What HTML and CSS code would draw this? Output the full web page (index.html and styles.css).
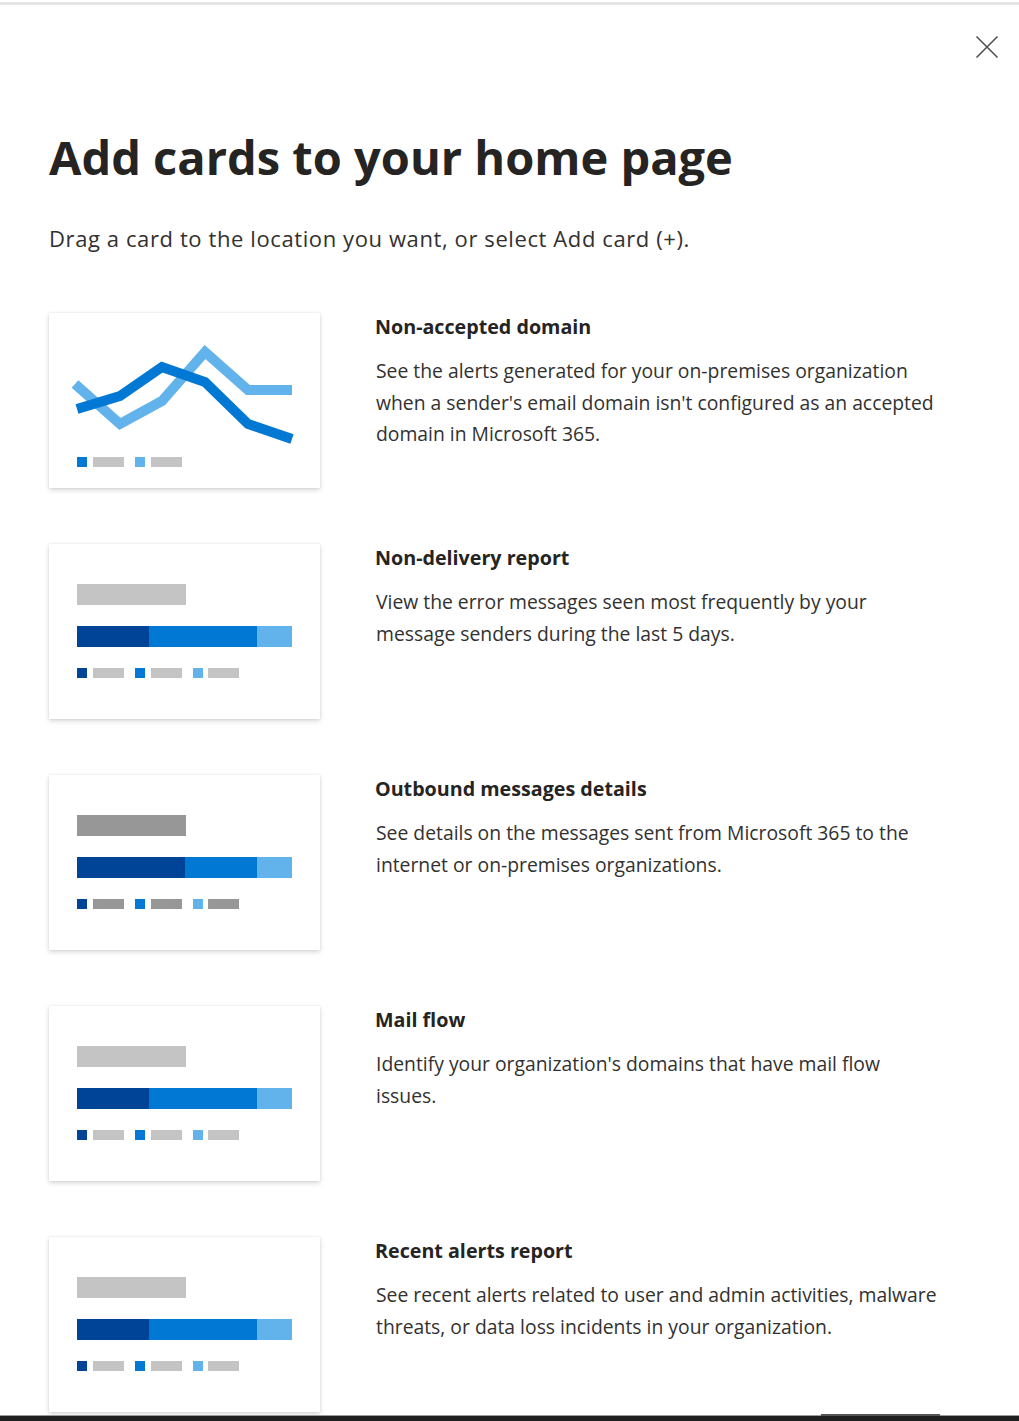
FILE: index.html
```html
<!DOCTYPE html>
<html lang="en">
<head>
<meta charset="utf-8">
<title>Add cards to your home page</title>
<link rel="stylesheet" href="styles.css">
</head>
<body>
<div class="page">
  <div class="panel">
    <div class="panel-header">
      <button class="close" aria-label="Close">
        <svg width="24" height="24" viewBox="0 0 24 24"><path d="M1.5 1.5 L22.5 22.5 M22.5 1.5 L1.5 22.5" stroke="#4a4a4a" stroke-width="1.5" fill="none"/></svg>
      </button>
    </div>
    <h1 class="title">Add cards to your home page</h1>
    <p class="subtitle">Drag a card to the location you want, or select Add card (+).</p>

    <div class="cards">
      <div class="card-row">
        <div class="thumb">
          <svg width="271" height="175" viewBox="0 0 271 175">
            <polyline points="26,71 71,111 113,88 156,39 199,77 243,77" fill="none" stroke="#62b2ec" stroke-width="10" stroke-linejoin="miter"/>
            <polyline points="28,96 71,83 113,54 156,69 199,111 243,126" fill="none" stroke="#0078d4" stroke-width="10" stroke-linejoin="miter"/>
            <rect x="28" y="144" width="10" height="10" fill="#0078d4"/>
            <rect x="44" y="144" width="31" height="10" fill="#c4c4c4"/>
            <rect x="86" y="144" width="10" height="10" fill="#62b2ec"/>
            <rect x="102" y="144" width="31" height="10" fill="#c4c4c4"/>
          </svg>
        </div>
        <div class="info">
          <h2 class="card-title">Non-accepted domain</h2>
          <p class="card-desc">See the alerts generated for your on-premises organization when a sender's email domain isn't configured as an accepted domain in Microsoft 365.</p>
        </div>
      </div>

      <div class="card-row">
        <div class="thumb">
          <svg width="271" height="175" viewBox="0 0 271 175">
            <rect x="28" y="40" width="109" height="21" fill="#c4c4c4"/>
            <rect x="28" y="82" width="72" height="21" fill="#004497"/>
            <rect x="100" y="82" width="108" height="21" fill="#0078d4"/>
            <rect x="208" y="82" width="35" height="21" fill="#62b2ec"/>
            <rect x="28" y="124" width="10" height="10" fill="#004497"/>
            <rect x="44" y="124" width="31" height="10" fill="#c4c4c4"/>
            <rect x="86" y="124" width="10" height="10" fill="#0078d4"/>
            <rect x="102" y="124" width="31" height="10" fill="#c4c4c4"/>
            <rect x="144" y="124" width="10" height="10" fill="#62b2ec"/>
            <rect x="159" y="124" width="31" height="10" fill="#c4c4c4"/>
          </svg>
        </div>
        <div class="info">
          <h2 class="card-title">Non-delivery report</h2>
          <p class="card-desc">View the error messages seen most frequently by your message senders during the last 5 days.</p>
        </div>
      </div>

      <div class="card-row">
        <div class="thumb">
          <svg width="271" height="175" viewBox="0 0 271 175">
            <rect x="28" y="40" width="109" height="21" fill="#979797"/>
            <rect x="28" y="82" width="108" height="21" fill="#004497"/>
            <rect x="136" y="82" width="72" height="21" fill="#0078d4"/>
            <rect x="208" y="82" width="35" height="21" fill="#62b2ec"/>
            <rect x="28" y="124" width="10" height="10" fill="#004497"/>
            <rect x="44" y="124" width="31" height="10" fill="#979797"/>
            <rect x="86" y="124" width="10" height="10" fill="#0078d4"/>
            <rect x="102" y="124" width="31" height="10" fill="#979797"/>
            <rect x="144" y="124" width="10" height="10" fill="#62b2ec"/>
            <rect x="159" y="124" width="31" height="10" fill="#979797"/>
          </svg>
        </div>
        <div class="info">
          <h2 class="card-title">Outbound messages details</h2>
          <p class="card-desc">See details on the messages sent from Microsoft 365 to the internet or on-premises organizations.</p>
        </div>
      </div>

      <div class="card-row">
        <div class="thumb">
          <svg width="271" height="175" viewBox="0 0 271 175">
            <rect x="28" y="40" width="109" height="21" fill="#c4c4c4"/>
            <rect x="28" y="82" width="72" height="21" fill="#004497"/>
            <rect x="100" y="82" width="108" height="21" fill="#0078d4"/>
            <rect x="208" y="82" width="35" height="21" fill="#62b2ec"/>
            <rect x="28" y="124" width="10" height="10" fill="#004497"/>
            <rect x="44" y="124" width="31" height="10" fill="#c4c4c4"/>
            <rect x="86" y="124" width="10" height="10" fill="#0078d4"/>
            <rect x="102" y="124" width="31" height="10" fill="#c4c4c4"/>
            <rect x="144" y="124" width="10" height="10" fill="#62b2ec"/>
            <rect x="159" y="124" width="31" height="10" fill="#c4c4c4"/>
          </svg>
        </div>
        <div class="info">
          <h2 class="card-title">Mail flow</h2>
          <p class="card-desc">Identify your organization's domains that have mail flow issues.</p>
        </div>
      </div>

      <div class="card-row">
        <div class="thumb">
          <svg width="271" height="175" viewBox="0 0 271 175">
            <rect x="28" y="40" width="109" height="21" fill="#c4c4c4"/>
            <rect x="28" y="82" width="72" height="21" fill="#004497"/>
            <rect x="100" y="82" width="108" height="21" fill="#0078d4"/>
            <rect x="208" y="82" width="35" height="21" fill="#62b2ec"/>
            <rect x="28" y="124" width="10" height="10" fill="#004497"/>
            <rect x="44" y="124" width="31" height="10" fill="#c4c4c4"/>
            <rect x="86" y="124" width="10" height="10" fill="#0078d4"/>
            <rect x="102" y="124" width="31" height="10" fill="#c4c4c4"/>
            <rect x="144" y="124" width="10" height="10" fill="#62b2ec"/>
            <rect x="159" y="124" width="31" height="10" fill="#c4c4c4"/>
          </svg>
        </div>
        <div class="info">
          <h2 class="card-title">Recent alerts report</h2>
          <p class="card-desc">See recent alerts related to user and admin activities, malware threats, or data loss incidents in your organization.</p>
        </div>
      </div>
    </div>
  </div>
  <div class="taskbar">
    <div class="taskbar-item"></div>
  </div>
</div>
</body>
</html>
```

FILE: styles.css
```css
html, body {
  margin: 0;
  padding: 0;
  height: 100%;
  background: #ffffff;
}

body {
  font-family: "Open Sans", "Noto Sans", sans-serif;
  color: #323130;
}

.page {
  height: 100vh;
  display: flex;
  flex-direction: column;
  overflow: hidden;
}

.panel {
  flex: 1;
  overflow: hidden;
  border-top: 3px solid #e6e6e6;
  margin-top: 2px;
  padding: 0 0 0 49px;
}

.panel-header {
  display: flex;
  justify-content: flex-end;
  padding: 30px 20px 0 0;
}

.close {
  width: 24px;
  height: 24px;
  padding: 0;
  margin: 0;
  border: none;
  background: transparent;
  display: flex;
}

.title {
  margin: 70px 0 0 0;
  font-size: 47px;
  line-height: 56px;
  font-weight: 700;
  color: #252423;
}

.subtitle {
  margin: 39px 0 0 0;
  font-size: 22px;
  line-height: 28px;
  letter-spacing: 0.6px;
  color: #323130;
}

.cards {
  margin-top: 61px;
  display: flex;
  flex-direction: column;
  gap: 56px;
}

.card-row {
  display: flex;
  gap: 55px;
  align-items: flex-start;
}

.thumb {
  width: 271px;
  height: 175px;
  flex: none;
  background: #ffffff;
  box-shadow: 0 2px 5px rgba(0, 0, 0, 0.16), 0 0 2px rgba(0, 0, 0, 0.08);
}

.thumb svg {
  display: block;
}

.info {
  width: 564px;
  padding-top: 0;
}

.card-title {
  margin: 0;
  font-size: 19.7px;
  line-height: 28px;
  font-weight: 700;
  color: #252423;
}

.card-desc {
  margin: 14px 0 0 1px;
  font-size: 19.33px;
  line-height: 31.5px;
  color: #323130;
}

.taskbar {
  flex: none;
  height: 5px;
  border-top: 1px solid #9a9a9a;
  background: #1f1f1f;
  position: relative;
}

.taskbar-item {
  position: absolute;
  left: 821px;
  top: -2px;
  width: 119px;
  height: 2px;
  background: #555555;
}
```
